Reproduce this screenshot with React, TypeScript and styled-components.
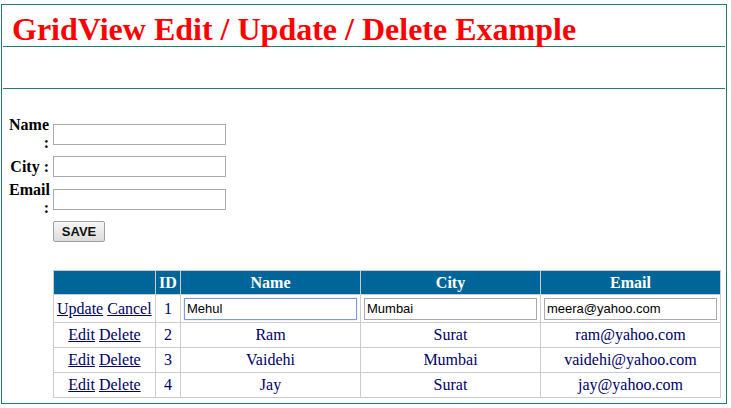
import React from "react";
import styled, { createGlobalStyle } from "styled-components";

const GlobalStyle = createGlobalStyle`
  html, body {
    margin: 0;
    padding: 0;
    background: #ffffff;
  }
  body {
    font-family: "Liberation Serif", "Times New Roman", serif;
    font-size: 16px;
    color: #000000;
  }
`;

type Person = { id: number; name: string; city: string; email: string };

const people: Person[] = [
  { id: 1, name: "Mehul", city: "Mumbai", email: "meera@yahoo.com" },
  { id: 2, name: "Ram", city: "Surat", email: "ram@yahoo.com" },
  { id: 3, name: "Vaidehi", city: "Mumbai", email: "vaidehi@yahoo.com" },
  { id: 4, name: "Jay", city: "Surat", email: "jay@yahoo.com" },
];

const App = () => {
  const editing = 1;

  return (
    <>
      <GlobalStyle />
      <Page>
        <Title>GridView Edit / Update / Delete Example</Title>
        <Rule />
        <Spacer />
        <Rule />

        <Form>
          <Label>Name :</Label>
          <TextBox type="text" />
          <Label>City :</Label>
          <TextBox type="text" />
          <Label>Email :</Label>
          <TextBox type="text" />
          <span />
          <div>
            <SaveButton type="button">SAVE</SaveButton>
          </div>
        </Form>

        <Grid>
          <colgroup>
            <col style={{ width: 102 }} />
            <col style={{ width: 25 }} />
            <col style={{ width: 180 }} />
            <col style={{ width: 180 }} />
            <col style={{ width: 180 }} />
          </colgroup>
          <thead>
            <tr>
              <HeadCell>&nbsp;</HeadCell>
              <HeadCell>ID</HeadCell>
              <HeadCell>Name</HeadCell>
              <HeadCell>City</HeadCell>
              <HeadCell>Email</HeadCell>
            </tr>
          </thead>
          <tbody>
            {people.map((p) =>
              p.id === editing ? (
                <EditRow key={p.id}>
                  <Cell $align="left">
                    <Action href="#">Update</Action> <Action href="#">Cancel</Action>
                  </Cell>
                  <Cell>{p.id}</Cell>
                  <Cell>
                    <CellInput type="text" defaultValue={p.name} $focused />
                  </Cell>
                  <Cell>
                    <CellInput type="text" defaultValue={p.city} />
                  </Cell>
                  <Cell>
                    <CellInput type="text" defaultValue={p.email} />
                  </Cell>
                </EditRow>
              ) : (
                <Row key={p.id}>
                  <Cell>
                    <Action href="#">Edit</Action> <Action href="#">Delete</Action>
                  </Cell>
                  <Cell>{p.id}</Cell>
                  <Cell>{p.name}</Cell>
                  <Cell>{p.city}</Cell>
                  <Cell>{p.email}</Cell>
                </Row>
              )
            )}
          </tbody>
        </Grid>
      </Page>
    </>
  );
};

export default App;

const Page = styled.div`
  box-sizing: border-box;
  width: 726px;
  height: 400px;
  margin: 4px 0 0 1px;
  padding: 0 1px;
  border: 1px solid #1f7a7a;
`;

const Title = styled.h1`
  margin: 0;
  padding: 6px 0 0 9px;
  height: 35px;
  font-family: "Liberation Serif", "Times New Roman", serif;
  font-size: 32px;
  line-height: 36px;
  font-weight: bold;
  color: #ff0000;
  white-space: nowrap;
`;

const Rule = styled.div`
  height: 1px;
  background: #1f7a7a;
`;

const Spacer = styled.div`
  height: 41px;
`;

const Form = styled.div`
  display: grid;
  grid-template-columns: 40px 174px;
  column-gap: 4px;
  row-gap: 4px;
  align-items: center;
  margin: 27px 0 0 6px;
`;

const Label = styled.label`
  font-weight: bold;
  font-size: 16px;
  line-height: 18px;
  text-align: right;
`;

const TextBox = styled.input`
  box-sizing: border-box;
  width: 173px;
  height: 21px;
  margin: 0;
  border: 1px solid #a9a9a9;
  background: #ffffff;
`;

const SaveButton = styled.button`
  box-sizing: border-box;
  width: 52px;
  height: 21px;
  margin: 0;
  padding: 0;
  border: 1px solid #a0a0a0;
  border-radius: 2px;
  background: linear-gradient(#f6f6f6, #dcdcdc);
  font-family: "Liberation Sans", Arial, sans-serif;
  font-size: 13px;
  font-weight: bold;
  color: #111111;
`;

const Grid = styled.table`
  box-sizing: border-box;
  width: 667px;
  table-layout: fixed;
  border-collapse: collapse;
  margin: 28px 0 0 50px;
  border: 1px solid #cccccc;
  color: #000066;
  font-size: 16px;
`;

const HeadCell = styled.th`
  height: 23px;
  padding: 0;
  border: 1px solid #cccccc;
  background: #006699;
  color: #ffffff;
  font-weight: bold;
  text-align: center;
`;

const Row = styled.tr`
  height: 25px;
`;

const EditRow = styled.tr`
  height: 28px;
`;

const Cell = styled.td<{ $align?: "left" | "center" }>`
  padding: 0 3px;
  border: 1px solid #cccccc;
  text-align: ${(p) => p.$align ?? "center"};
  white-space: nowrap;
  overflow: hidden;
`;

const Action = styled.a`
  color: #000066;
  text-decoration: underline;
`;

const CellInput = styled.input<{ $focused?: boolean }>`
  box-sizing: border-box;
  display: block;
  width: 173px;
  height: 22px;
  margin: 0;
  padding: 1px 2px;
  border: 1px solid ${(p) => (p.$focused ? "#7f9dd0" : "#a9a9a9")};
  box-shadow: ${(p) => (p.$focused ? "0 0 1px #9fb9e6" : "none")};
  font-family: "Liberation Sans", Arial, sans-serif;
  font-size: 13px;
  color: #000000;
`;
